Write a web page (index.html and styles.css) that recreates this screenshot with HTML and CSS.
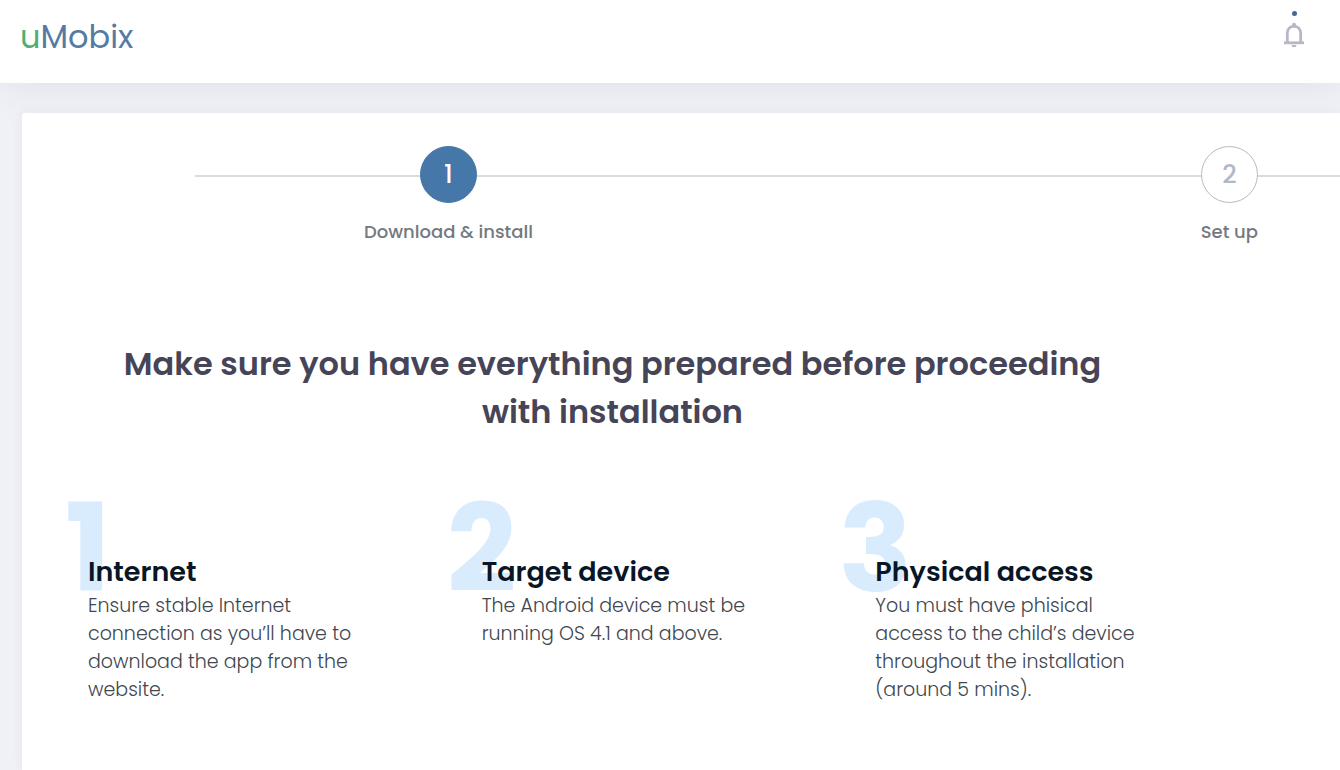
FILE: index.html
```html
<!DOCTYPE html>
<html lang="en">
<head>
<meta charset="UTF-8">
<meta name="viewport" content="width=device-width, initial-scale=1.0">
<title>uMobix</title>
<link rel="stylesheet" href="styles.css">
</head>
<body>
    <header class="header">
        <a class="logo" href="#"><span class="logo-u">u</span>Mobix</a>
        <button class="bell" type="button" aria-label="Notifications">
            <span class="bell-dot"></span>
            <svg width="22" height="26" viewBox="0 0 22 26" fill="none">
                <path d="M4.300 20.500V11.500C4.300 7 7 4.300 11 4.300s6.700 2.700 6.700 7.200v9" stroke="#b6b8c6" stroke-width="2.800"/>
                <path d="M1 20.800h20" stroke="#b6b8c6" stroke-width="2.800"/>
                <path d="M9 4V2.800a2 2 0 0 1 4 0V4z" fill="#b6b8c6"/>
                <path d="M8.500 23h5a2.500 2.300 0 0 1-5 0z" fill="#b6b8c6"/>
            </svg>
        </button>
    </header>

    <main class="card">
        <ol class="steps">
            <li class="step active">
                <span class="step-circle">1</span>
                <span class="step-label">Download &amp; install</span>
            </li>
            <li class="step">
                <span class="step-circle">2</span>
                <span class="step-label">Set up</span>
            </li>
        </ol>

        <section class="content">
            <h1>Make sure you have everything prepared before proceeding<br>with installation</h1>
            <div class="items">
                <div class="item">
                    <span class="item-number">1</span>
                    <h2>Internet</h2>
                    <p>Ensure stable Internet<br>connection as you’ll have to<br>download the app from the<br>website.</p>
                </div>
                <div class="item">
                    <span class="item-number">2</span>
                    <h2>Target device</h2>
                    <p>The Android device must be<br>running OS 4.1 and above.</p>
                </div>
                <div class="item">
                    <span class="item-number">3</span>
                    <h2>Physical access</h2>
                    <p>You must have phisical<br>access to the child’s device<br>throughout the installation<br>(around 5 mins).</p>
                </div>
            </div>
        </section>
    </main>
</body>
</html>
```
FILE: styles.css
```css
* {
    box-sizing: border-box;
}
body {
    margin: 0;
    min-height: 100vh;
    display: flex;
    flex-direction: column;
    font-family: 'Poppins', sans-serif;
    background: #f0f0f7;
}
h1, h2, p, ol {
    margin: 0;
    padding: 0;
}

/* header */
.header {
    display: flex;
    justify-content: space-between;
    align-items: flex-start;
    padding: 10px 35px 26px 20px;
    background: #fff;
    box-shadow: 0 0 40px rgba(80, 75, 90, 0.1);
}
.logo {
    margin-top: 7px;
    font-size: 32px;
    line-height: 40px;
    color: #567aa3;
    text-decoration: none;
}
.logo-u {
    color: #4fae78;
}
.bell {
    display: flex;
    flex-direction: column;
    align-items: center;
    gap: 6px;
    padding: 0;
    border: none;
    background: none;
    cursor: pointer;
}
.bell-dot {
    width: 5px;
    height: 5px;
    margin-top: 1px;
    border-radius: 50%;
    background: #44688f;
}

/* card */
.card {
    flex: 1;
    margin: 30px 0 0 22px;
    padding-top: 33px;
    background: #fff;
    border-top-left-radius: 3px;
    box-shadow: 0 0 13px rgba(82, 63, 105, 0.05);
}

/* steps */
.steps {
    position: relative;
    display: flex;
    justify-content: space-between;
    padding: 0 82px 0 342px;
    list-style: none;
}
.steps::before {
    content: "";
    position: absolute;
    top: 29px;
    left: 173px;
    right: 0;
    height: 2px;
    background: #dadbdd;
}
.step {
    position: relative;
    display: flex;
    flex-direction: column;
    align-items: center;
    gap: 17px;
}
.step-circle {
    width: 57px;
    height: 57px;
    border: 1px solid #b5bbc5;
    border-radius: 50%;
    background: #fff;
    color: #b0bac5;
    font-size: 25px;
    font-weight: 500;
    line-height: 55px;
    text-align: center;
}
.active .step-circle {
    border-color: #4577a8;
    background: #4577a8;
    color: #fff;
}
.step-label {
    color: #74787f;
    font-size: 18px;
    font-weight: 500;
    line-height: 24px;
    white-space: nowrap;
}

/* content */
.content {
    max-width: 1181px;
    padding-top: 96px;
}
h1 {
    color: #464457;
    font-size: 32px;
    font-weight: 600;
    line-height: 48px;
    text-align: center;
}
.items {
    display: grid;
    grid-template-columns: repeat(3, 1fr);
    padding: 118px 0 60px;
}
.item {
    position: relative;
    padding-left: 66px;
}
.item-number {
    position: absolute;
    top: -66px;
    left: 0;
    width: 132px;
    color: #d9ecfd;
    font-size: 122px;
    font-weight: 700;
    line-height: 122px;
    text-align: center;
}
h2 {
    position: relative;
    margin-bottom: 2px;
    color: #081626;
    font-size: 27px;
    font-weight: 600;
    line-height: 36px;
}
.item p {
    position: relative;
    color: #40474f;
    font-size: 19px;
    font-weight: 300;
    line-height: 28px;
    white-space: nowrap;
}
```
